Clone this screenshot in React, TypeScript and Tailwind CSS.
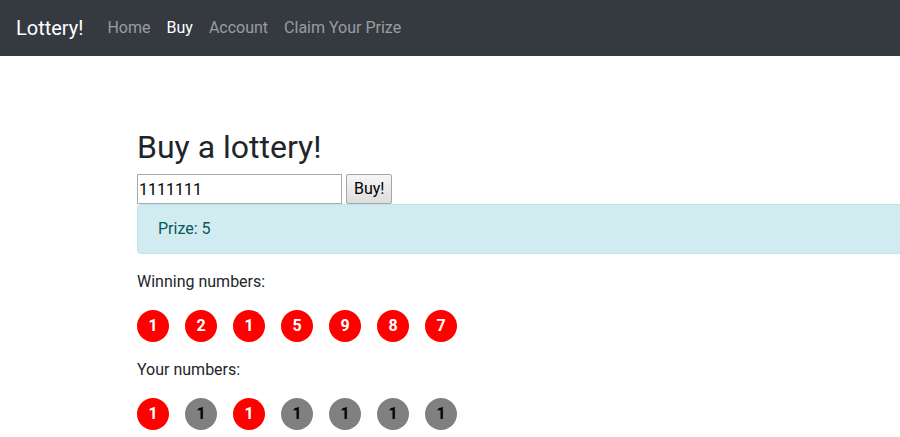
import type { FC } from "react";

const winning = [1, 2, 1, 5, 9, 8, 7];
const yours = [1, 1, 1, 1, 1, 1, 1];

const Ball: FC<{ n: number; hit: boolean }> = ({ n, hit }) => (
    <div
        className={
            hit
                ? "size-8 rounded-full bg-[#ff0000] text-white font-bold flex items-center justify-center"
                : "size-8 rounded-full bg-[#808080] text-black font-bold flex items-center justify-center"
        }
    >
        {n}
    </div>
);

const App: FC = () => {
    return (
        <div className="min-h-[437px] bg-white text-[#212529] font-['Roboto',sans-serif] text-base leading-6 overflow-hidden">
            <nav className="h-14 bg-[#343a40] flex items-center px-4">
                <span className="text-white text-xl mr-4 leading-[30px]">Lottery!</span>
                <div className="flex">
                    <a className="px-2 text-white/50">Home</a>
                    <a className="px-2 text-white">Buy</a>
                    <a className="px-2 text-white/50">Account</a>
                    <a className="px-2 text-white/50">Claim Your Prize</a>
                </div>
            </nav>
            <div className="pl-[137px] pt-[72px]">
                <h2 className="text-[32px] leading-[38px] font-normal mb-2">Buy a lottery!</h2>
                <div className="flex items-center gap-1 h-[30px]">
                    <input
                        defaultValue="1111111"
                        className="w-[205px] h-[30px] border border-[#a9a9a9] px-px text-black outline-none"
                    />
                    <button className="h-[30px] px-[7px] border border-[#a6a6a6] rounded-[2px] bg-gradient-to-b from-[#f6f6f6] to-[#dddddd] text-black">
                        Buy!
                    </button>
                </div>
                <div className="w-[900px] mb-4 border border-[#bee5eb] bg-[#d1ecf1] text-[#0c5460] rounded py-3 px-5">
                    Prize: 5
                </div>
                <p className="mb-4">Winning numbers:</p>
                <div className="flex gap-4 mb-4">
                    {winning.map((n, i) => (
                        <Ball key={i} n={n} hit={true} />
                    ))}
                </div>
                <p className="mb-4">Your numbers:</p>
                <div className="flex gap-4">
                    {yours.map((n, i) => (
                        <Ball key={i} n={n} hit={n === winning[i]} />
                    ))}
                </div>
            </div>
        </div>
    );
};

export default App;
